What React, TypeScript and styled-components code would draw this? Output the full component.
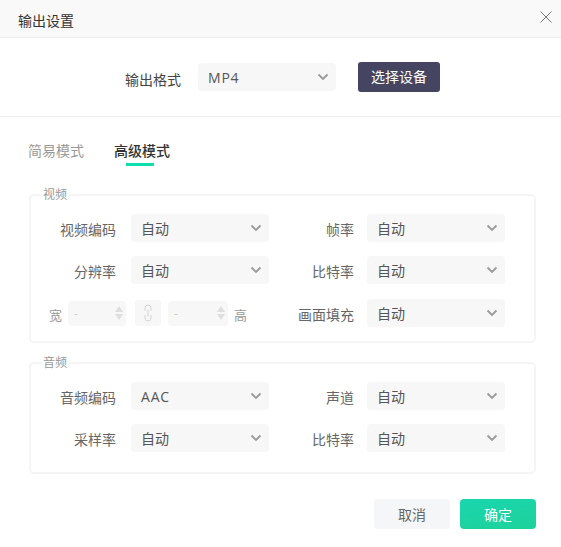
import React from "react";
import styled, { createGlobalStyle } from "styled-components";

const Global = createGlobalStyle`
  html, body { margin: 0; padding: 0; background: #fff; }
  body { font-family: "Open Sans", "Noto Sans CJK SC", sans-serif; }
`;

const Dialog = styled.div`
  width: 561px;
  height: 547px;
  background: #fff;
  display: flex;
  flex-direction: column;
  overflow: hidden;
`;
const Header = styled.header`
  flex: none;
  background: #f9f9f9;
  border-bottom: 1px solid #eeeeee;
  display: flex;
  align-items: center;
  justify-content: space-between;
  padding: 2px 8px 0 18px;
  height: 35px;
`;
const Title = styled.h1`
  margin: 0;
  font-size: 14px;
  font-weight: 400;
  color: #333;
`;
const Close = styled.button`
  all: unset;
  width: 14px;
  height: 14px;
  margin-top: -5px;
  display: flex;
  color: #777;
`;
const FormatRow = styled.section`
  height: 78px;
  flex: none;
  border-bottom: 1px solid #eeeeee;
  display: flex;
  align-items: center;
  padding: 0 0 0 125px;
`;
const FormatLabel = styled.label`
  font-size: 14px;
  color: #444;
  margin: 4px 17px 0 0;
`;
const DeviceButton = styled.button`
  all: unset;
  width: 82px;
  height: 30px;
  margin: 0 0 0 22px;
  border-radius: 3px;
  background: #454562;
  color: #fff;
  font-size: 14px;
  text-align: center;
  line-height: 30px;
`;
const Tabs = styled.nav`
  display: flex;
  gap: 30px;
  padding: 25px 0 0 28px;
  height: 46px;
  flex: none;
`;
const Tab = styled.div<{ $active?: boolean }>`
  position: relative;
  font-size: 14px;
  line-height: 18px;
  height: 18px;
  color: ${(p) => (p.$active ? "#333" : "#999")};
  font-weight: ${(p) => (p.$active ? 500 : 400)};
  ${(p) =>
    p.$active
      ? `&::after { content: ""; position: absolute; left: 12px; top: 21px; width: 28px; height: 3px; background: #0de0ae; }`
      : ""}
`;
const Group = styled.fieldset<{ $height: number }>`
  margin: 0 25px 13px 29px;
  padding: 0;
  height: ${(p) => p.$height}px;
  box-sizing: border-box;
  border: 2px solid #f5f5f5;
  border-radius: 5px;
  min-width: 0;
  display: flex;
  flex-direction: column;
  flex: none;
`;
const Legend = styled.legend`
  margin-left: 11px;
  padding: 0 2px 0 1px;
  font-size: 12px;
  line-height: 14px;
  color: #999;
`;
const Rows = styled.div`
  display: grid;
  grid-template-columns: 236px 1fr;
  row-gap: 14px;
  padding-top: 12px;
`;
const Field = styled.div`
  display: flex;
  align-items: center;
  height: 28px;
`;
const OffsetField = styled(Field)`
  margin-top: 1px;
`;
const FieldLabel = styled.label`
  width: 85px;
  text-align: right;
  flex: none;
  font-size: 14px;
  color: #666;
  margin: 2px 15px 0 0;
`;
const RightLabel = styled(FieldLabel)`
  width: 87px;
  margin-right: 13px;
`;
const SelectBox = styled.div`
  width: 138px;
  height: 28px;
  flex: none;
  box-sizing: border-box;
  border-radius: 4px;
  background: #f7f7f7;
  display: flex;
  align-items: center;
  justify-content: space-between;
  padding: 0 7px 0 10px;
  font-size: 14px;
  color: #555;
  svg { color: #999; }
`;
const SelectValue = styled.span<{ $latin?: boolean }>`
  letter-spacing: ${(p) => (p.$latin ? "0.8px" : "0")};
`;
const SizeRow = styled.div`
  display: flex;
  align-items: center;
  height: 28px;
  margin-top: 1px;
  padding-left: 18px;
  font-size: 12px;
  color: #999;
`;
const SizeLabel = styled.span<{ $left?: number }>`
  width: 13px;
  flex: none;
  font-size: 13px;
  margin: 2px 0 0 ${(p) => p.$left ?? 0}px;
`;
const Stepper = styled.div<{ $width: number; $left: number }>`
  width: ${(p) => p.$width}px;
  height: 25px;
  margin-left: ${(p) => p.$left}px;
  background: #f7f7f7;
  border-radius: 4px;
  flex: none;
  display: flex;
  align-items: center;
  justify-content: space-between;
  box-sizing: border-box;
  padding: 0 2px 0 6px;
  color: #ccc;
`;
const LinkBox = styled.div`
  width: 26px;
  height: 26px;
  margin-left: 9px;
  background: #f7f7f7;
  border-radius: 3px;
  flex: none;
  display: flex;
  align-items: center;
  justify-content: center;
`;
const Footer = styled.footer`
  display: flex;
  justify-content: flex-end;
  gap: 10px;
  padding: 12px 25px 0 0;
`;
const FooterButton = styled.button<{ $primary?: boolean }>`
  all: unset;
  width: 76px;
  height: 30px;
  line-height: 31px;
  text-align: center;
  font-size: 14px;
  border-radius: 4px;
  color: ${(p) => (p.$primary ? "#fff" : "#666")};
  background: ${(p) => (p.$primary ? "linear-gradient(170deg,#1ad6ae,#1dd29a)" : "#f5f6f8")};
`;

const Chevron = () => (
  <svg width="12" height="8" viewBox="0 0 12 8" fill="none">
    <path d="M1.5 1.5 6 6l4.5-4.5" stroke="currentColor" strokeWidth="1.8" />
  </svg>
);
const Select = ({ value, latin }: { value: string; latin?: boolean }) => (
  <SelectBox>
    <SelectValue $latin={latin}>{value}</SelectValue>
    <Chevron />
  </SelectBox>
);
const Spin = () => (
  <svg width="10" height="16" viewBox="0 0 10 16">
    <path d="M5 1 9 7H1zM1 9h8l-4 6z" fill="#dedede" />
  </svg>
);
const Link = () => (
  <svg width="8" height="18" viewBox="0 0 8 18" fill="none" stroke="#cfcfcf" strokeWidth="0.9">
    <path d="M1 7V4a3 3 0 0 1 6 0v3M1 11v3a3 3 0 0 0 6 0v-3M4 5.5v7" />
  </svg>
);
const Row = ({ label, value, latin }: { label: string; value: string; latin?: boolean }) => (
  <Field>
    <FieldLabel>{label}</FieldLabel>
    <Select value={value} latin={latin} />
  </Field>
);
const RightRow = ({ label, value, offset }: { label: string; value: string; offset?: boolean }) => {
  const Wrap = offset ? OffsetField : Field;
  return (
    <Wrap>
      <RightLabel>{label}</RightLabel>
      <Select value={value} />
    </Wrap>
  );
};

export default function App() {
  return (
    <Dialog>
      <Global />
      <Header>
        <Title>输出设置</Title>
        <Close aria-label="关闭">
          <svg width="14" height="14" viewBox="0 0 14 14" fill="none" stroke="currentColor" strokeWidth="1">
            <path d="M1.5 1.5l11 11M12.5 1.5l-11 11" />
          </svg>
        </Close>
      </Header>
      <FormatRow>
        <FormatLabel>输出格式</FormatLabel>
        <Select value="MP4" latin />
        <DeviceButton>选择设备</DeviceButton>
      </FormatRow>
      <Tabs>
        <Tab>简易模式</Tab>
        <Tab $active>高级模式</Tab>
      </Tabs>
      <Group $height={155}>
        <Legend>视频</Legend>
        <Rows>
          <Row label="视频编码" value="自动" />
          <RightRow label="帧率" value="自动" />
          <Row label="分辨率" value="自动" />
          <RightRow label="比特率" value="自动" />
          <SizeRow>
            <SizeLabel>宽</SizeLabel>
            <Stepper $width={58} $left={6}>-<Spin /></Stepper>
            <LinkBox><Link /></LinkBox>
            <Stepper $width={60} $left={7}>-<Spin /></Stepper>
            <SizeLabel $left={6}>高</SizeLabel>
          </SizeRow>
          <RightRow label="画面填充" value="自动" offset />
        </Rows>
      </Group>
      <Group $height={118}>
        <Legend>音频</Legend>
        <Rows>
          <Row label="音频编码" value="AAC" latin />
          <RightRow label="声道" value="自动" />
          <Row label="采样率" value="自动" />
          <RightRow label="比特率" value="自动" />
        </Rows>
      </Group>
      <Footer>
        <FooterButton>取消</FooterButton>
        <FooterButton $primary>确定</FooterButton>
      </Footer>
    </Dialog>
  );
}
